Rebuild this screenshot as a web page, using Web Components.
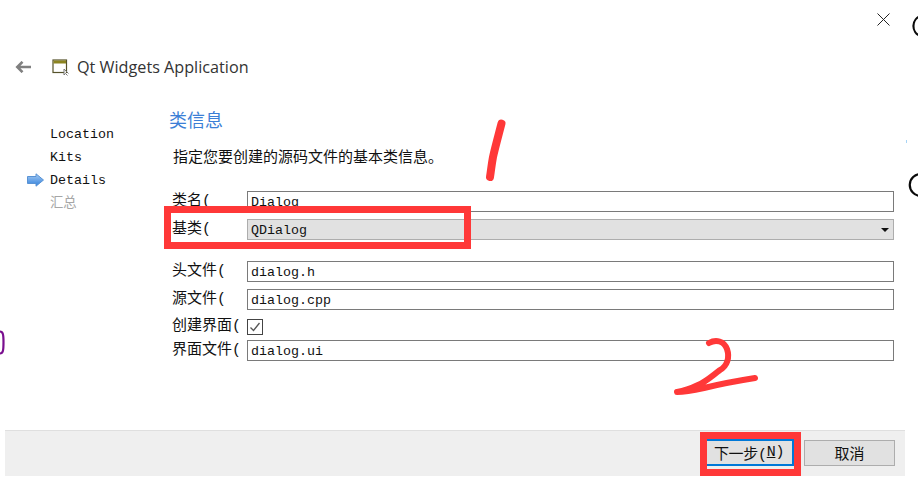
<!DOCTYPE html>
<html lang="zh">
<head>
<meta charset="utf-8">
<style>
html,body{margin:0;padding:0;background:#fff}
body{font-family:"Liberation Mono","Noto Sans CJK SC",monospace;color:#111}
</style>
</head>
<body>
<wizard-dialog>
  <wizard-header slot="header" title-text="Qt Widgets Application"></wizard-header>
  <wizard-steps slot="steps">
    <wizard-step>Location</wizard-step>
    <wizard-step>Kits</wizard-step>
    <wizard-step current>Details</wizard-step>
    <wizard-step muted>汇总</wizard-step>
  </wizard-steps>
  <wizard-page slot="page" heading="类信息" note="指定您要创建的源码文件的基本类信息。">
    <form-row label="类名(" ><line-edit>Dialog</line-edit></form-row>
    <form-row label="基类("><combo-field>QDialog</combo-field></form-row>
    <form-row label="头文件(" style="margin-top:14px"><line-edit>dialog.h</line-edit></form-row>
    <form-row label="源文件("><line-edit>dialog.cpp</line-edit></form-row>
    <form-row label="创建界面(" compact><check-field></check-field></form-row>
    <form-row label="界面文件("><line-edit>dialog.ui</line-edit></form-row>
  </wizard-page>
  <wizard-footer slot="footer">
    <wizard-button primary>下一步(<u>N</u>)</wizard-button>
    <wizard-button>取消</wizard-button>
  </wizard-footer>
  <wizard-marks slot="marks"></wizard-marks>
</wizard-dialog>
<script>
function make(name, html){
  customElements.define(name, class extends HTMLElement{
    connectedCallback(){
      if(this.shadowRoot) return;
      const r=this.attachShadow({mode:'open'});
      r.innerHTML=typeof html==='function'?html(this):html;
    }
  });
}
const MIX='"Liberation Mono","Noto Sans CJK SC",monospace';
make('wizard-dialog',`<style>
:host{display:flex;flex-direction:column;position:relative;width:918px;height:479px;overflow:hidden;background:#fff}
.close{display:flex;justify-content:flex-end;padding:13px 28px 0 0;height:52px;box-sizing:border-box}
.close svg{display:block}
.body{display:flex;flex:1;min-height:0}
.foot{height:46px;margin:0 13px 3px 5px;flex:none}
</style>
<div class="close"><svg width="13" height="13" viewBox="0 0 13 13"><path d="M.5.5l12 12M12.5.5l-12 12" stroke="#222" stroke-width="1" fill="none"/></svg></div>
<slot name="header"></slot>
<div class="body"><slot name="steps"></slot><slot name="page"></slot></div>
<div class="foot"><slot name="footer"></slot></div>
<slot name="marks"></slot>`);
make('wizard-header',h=>`<style>
:host{display:flex;align-items:center;height:30px;margin-bottom:14px;padding-left:15px;font:16.200px "Open Sans","Noto Sans",sans-serif;color:#333}
svg{display:block;flex:none}
.a{margin-right:21px}
.i{margin-right:8px}
</style>
<svg class="a" width="16" height="12" viewBox="0 0 16 12"><path d="M16 6H3M7.500 .8L2.300 6l5.200 5.200" stroke="#808080" stroke-width="2.600" fill="none"/></svg>
<svg class="i" width="17" height="17" viewBox="0 0 17 17"><rect x="1" y="1" width="13.500" height="12.500" fill="#fff" stroke="#55522a" stroke-width="1.200"/><rect x="1.500" y="1.500" width="12.500" height="3" fill="#8c8420"/><path d="M12 10v6l1.500-1.500L15.500 16.500M12 10l4.500 4.500" fill="#fff" stroke="#777" stroke-width="1"/></svg>
<span>${h.getAttribute('title-text')}</span>`);
make('wizard-steps',`<style>
:host{display:flex;flex-direction:column;flex:none;width:169px;padding:27px 0 0 50px;box-sizing:border-box}
</style><slot></slot>`);
make('wizard-step',h=>`<style>
:host{display:block;position:relative;height:23px;line-height:23px;font-size:13.330px;color:${h.hasAttribute('muted')?'#a6a6a6':'#111'}}
svg{position:absolute;left:-23px;top:4px}
</style>${h.hasAttribute('current')?`<svg width="17" height="14" viewBox="0 0 17 14"><defs><linearGradient id="g" x1="0" y1="0" x2="0" y2="1"><stop offset="0" stop-color="#a9cdf3"/><stop offset="1" stop-color="#2f7fdc"/></linearGradient></defs><path d="M.5 3.500h8.500V.8L16.500 7 9 13.200V10.500H.5z" fill="url(#g)" stroke="#5a93d4"/></svg>`:''}<slot></slot>`);
make('wizard-page',h=>`<style>
:host{display:flex;flex-direction:column;flex:1;min-width:0;padding:11px 24px 0 0}
h2{margin:0;font:400 18px/24px "Noto Sans CJK SC",sans-serif;color:#3c7fd6}
p{margin:18px 0 22px 4px;font:400 15px/20px ${MIX};color:#111}
.rows{display:flex;flex-direction:column;gap:7px;padding-left:3px}
</style><h2>${h.getAttribute('heading')}</h2><p>${h.getAttribute('note')}</p><div class="rows"><slot></slot></div>`);
make('form-row',h=>`<style>
:host{display:grid;grid-template-columns:75px 1fr;align-items:center;height:${h.hasAttribute('compact')?'16px':'21px'}}
span{font:400 15px/20px ${MIX};color:#111;white-space:nowrap}
</style><span>${h.getAttribute('label')}</span><slot></slot>`);
make('line-edit',`<style>
:host{display:block;box-sizing:border-box;height:21px;border:1px solid #7a7a7a;background:#fff;padding-left:3px;line-height:21px;font-size:13.330px;color:#111;overflow:hidden}
</style><slot></slot>`);
make('combo-field',`<style>
:host{display:flex;justify-content:space-between;align-items:center;box-sizing:border-box;height:21px;border:1px solid #adadad;background:#e1e1e1;padding:1px 4px 0 3px;line-height:19px;font-size:13.330px;color:#111}
i{width:0;height:0;border:4px solid transparent;border-top:4px solid #111;border-bottom:0;display:block}
</style><slot></slot><i></i>`);
make('check-field',`<style>
:host{display:block;box-sizing:border-box;width:16px;height:16px;border:1px solid #444;background:#fff}
svg{display:block}
</style><svg width="14" height="14" viewBox="0 0 14 14"><path d="M2.500 7.500l3 3L11.500 3" fill="none" stroke="#555" stroke-width="1.300"/></svg>`);
make('wizard-footer',`<style>
:host{display:flex;justify-content:flex-end;align-items:flex-start;gap:10px;height:46px;box-sizing:border-box;background:#efefef;border-top:1px solid #dfdfdf;padding:8px 10px 0 0}
</style><slot></slot>`);
make('wizard-button',h=>`<style>
:host{display:flex;align-items:center;justify-content:center;box-sizing:border-box;${h.hasAttribute('primary')?'height:27px;width:90px;border:2px solid #0078d7;letter-spacing:-.3px':'height:26px;width:91px;margin-top:1px;border:1px solid #adadad'};background:#e1e1e1;font:400 15px ${MIX};color:#111}
::slotted(u){text-decoration:underline}
</style><slot></slot>`);
make('wizard-marks',`<style>
:host{position:absolute;inset:0;pointer-events:none}
svg{position:absolute;left:0;top:0}
</style><svg width="918" height="479" viewBox="0 0 918 479" fill="none">
<path d="M921 16a10.500 10.500 0 0 0-.5 20" stroke="#0a0a0a" stroke-width="2.200"/>
<path d="M921 174a11 11 0 0 0-.5 22" stroke="#0a0a0a" stroke-width="2.200"/>
<path d="M0 331.500c3 0 3.500 3 3.500 11s-.5 11-3.500 11" stroke="#7a0f8f" stroke-width="2.200"/>
<path d="M906.500 140v3" stroke="#a8d4f5"/>
<rect x="167.500" y="209.500" width="300" height="36" stroke="#ff3838" stroke-width="7"/>
<rect x="703.500" y="435.500" width="94" height="37" stroke="#ff3838" stroke-width="7"/>
<path d="M501.500 123.500C498 137 495 148 493 157C491.500 165 491 171 490 177" stroke="#ff3838" stroke-width="8" stroke-linecap="round"/>
<path d="M709 343C716 339 724 341 727 349C730 358 727 366 720 370C713 375 707 381 698 385C690 389 684 391 677 392C686 392 695 390 704 388C716 385 730 382 755 378" stroke="#ff3838" stroke-width="6" stroke-linecap="round" stroke-linejoin="round"/>
</svg>`);
</script>
</body>
</html>
